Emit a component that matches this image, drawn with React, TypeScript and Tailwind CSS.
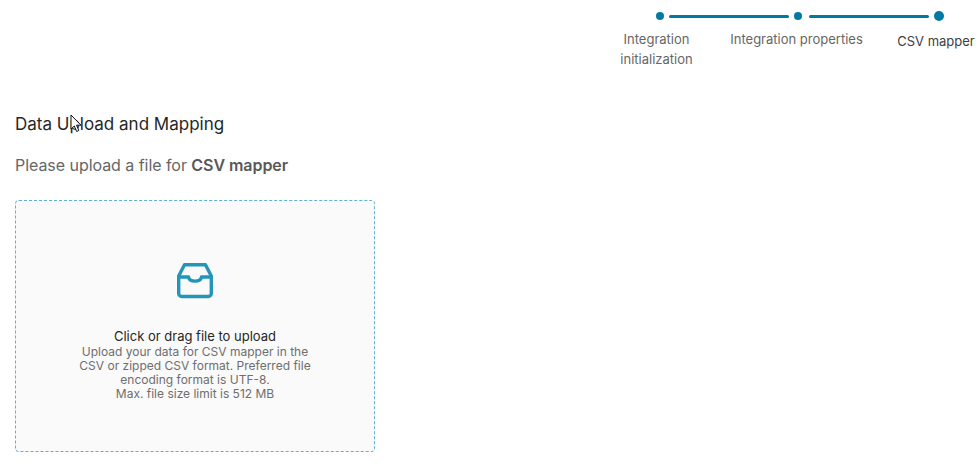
export default function App() {
  return (
    <div className="relative h-[466px] w-[980px] overflow-hidden bg-white font-['Inter',sans-serif] text-[#262626]">
      <div className="flex justify-end pt-[11px]">
        <div className="flex w-[370px] flex-col">
          <div className="flex h-[10px] items-center pl-[46px] pr-[31px]">
            <span className="h-[8px] w-[8px] rounded-full bg-[#0079a3]" />
            <span className="ml-[5px] mr-[5px] h-[3px] w-[120px] rounded-full bg-[#0079a3]" />
            <span className="h-[8px] w-[8px] rounded-full bg-[#0079a3]" />
            <span className="ml-[7px] mr-[5px] h-[3px] w-[120px] rounded-full bg-[#0079a3]" />
            <span className="h-[10px] w-[10px] rounded-full bg-[#0079a3]" />
          </div>
          <div className="mt-[8px] flex text-center text-[13px] leading-[20px] text-[#666666]">
            <div className="ml-[-3.5px] w-[100px] shrink-0 px-[6px]">Integration initialization</div>
            <div className="ml-[9.5px] w-[161px] shrink-0">Integration properties</div>
            <div className="ml-[20px] mt-[2px] w-[78px] shrink-0 whitespace-nowrap text-[#404040]">CSV mapper</div>
          </div>
        </div>
      </div>

      <div className="pl-[15px] pt-[43px]">
        <h1 className="text-[17px] font-[420] leading-[24px] text-[#262626]">Data Upload and Mapping</h1>
        <p className="mt-[17px] text-[16px] leading-[24px] tracking-[-0.05px] text-[#666666]">
          Please upload a file for <strong className="font-semibold text-[#595959]">CSV mapper</strong>
        </p>
        <div className="mt-[23px] flex h-[252px] w-[360px] flex-col items-center rounded-[4px] border border-dashed border-[#5fb3c9] bg-[#fafafa] pt-[62px] text-center">
          <svg width="36" height="36" viewBox="0 0 36 36" fill="none" stroke="#2196b8" strokeWidth="3.4" strokeLinejoin="round" strokeLinecap="round" aria-hidden="true">
            <path d="M7.5 1.7H28.5L34.3 13V30.5A3 3 0 0 1 31.3 33.5H4.7A3 3 0 0 1 1.7 30.5V13Z" />
            <path d="M1.7 14H11.5C12.5 19.5 23.5 19.5 24.5 14H34.3" />
          </svg>
          <div className="mt-[29px] text-[13px] leading-[16px] text-[#262626]">Click or drag file to upload</div>
          <p className="mt-[1px] w-[240px] text-[12px] leading-[14px] text-[#6e6e6e]">
            Upload your data for CSV mapper in the CSV or zipped CSV format. Preferred file encoding format is UTF-8.
            <br />
            Max. file size limit is 512 MB
          </p>
        </div>
      </div>

      <svg className="absolute left-[70px] top-[114px]" width="12" height="19" viewBox="0 0 12 19" aria-hidden="true">
        <path d="M1 1V15L4.3 12L6.6 17.5L8.8 16.5L6.5 11.2H11Z" fill="#ffffff" stroke="#111111" strokeWidth="1" />
      </svg>
    </div>
  );
}
